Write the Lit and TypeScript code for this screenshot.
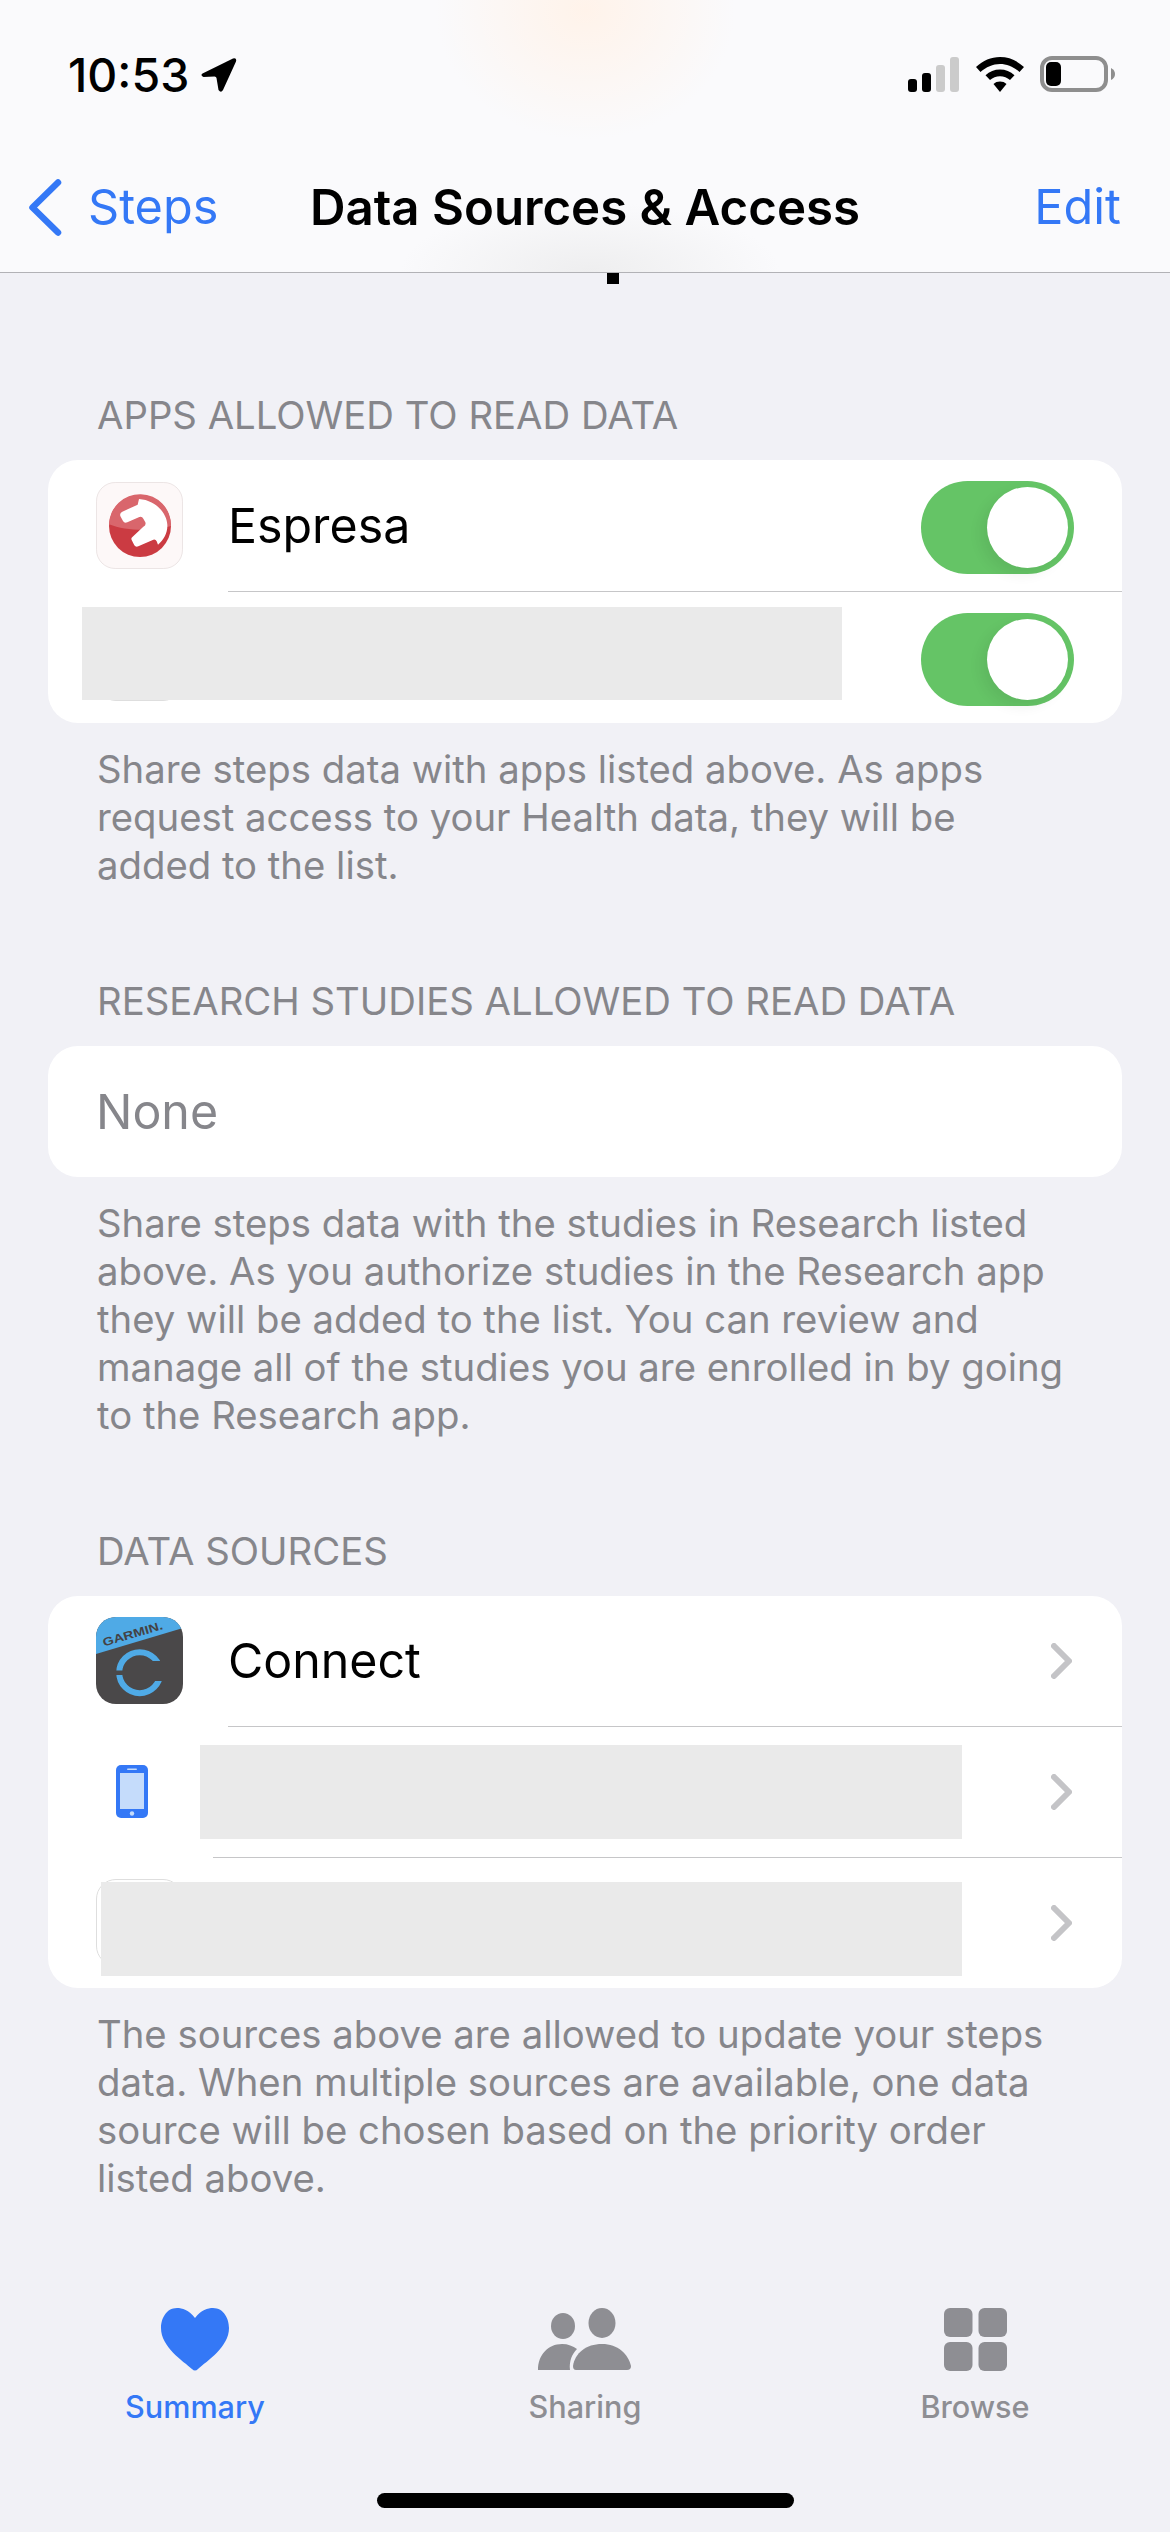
import { LitElement, html, css } from "lit";
import { customElement } from "lit/decorators.js";

const espresa = html`<svg class="app" viewBox="18 18 261 261" aria-hidden="true">
  <rect x="19.5" y="19.5" width="258" height="258" rx="56" fill="#fdf8f8" stroke="#e8e0e0" stroke-width="2.5"/>
  <circle cx="150" cy="150" r="93" fill="#cb3b42"/>
  <path d="M57 145 A93 93 0 0 1 243 150 C190 166 110 166 57 145Z" fill="#d9666c"/>
  <path d="M147 69 L143 86 L97 107 Q87 112 92 122 L99 135 Q103 143 112 139 L148 123 Q156 120 160 128 L166 139 Q169 148 160 152 L128 182 Q122 186 125 192 L133 208 Q137 214 145 211 L190 191 Q196 188 200 196 L204 206 C222 190 233 170 232 146 C230 110 195 72 147 69Z" fill="#fff"/>
</svg>`;

const garmin = html`<svg class="app" viewBox="0 0 87 87" aria-hidden="true">
  <defs><clipPath id="gc"><rect width="87" height="87" rx="20"/></clipPath></defs>
  <g clip-path="url(#gc)">
    <rect width="87" height="87" fill="#4a4849"/>
    <path d="M0 0H87V11L0 37Z" fill="#4faae6"/>
    <text x="8" y="29.500" transform="rotate(-16.4 8 29.500)" class="garmin" textLength="62" lengthAdjust="spacingAndGlyphs">GARMIN.</text>
  </g>
  <circle cx="43.700" cy="55.700" r="20.500" fill="none" stroke="#4faae6" stroke-width="6"/>
  <rect x="18" y="53.500" width="14" height="4.500" fill="#4a4849"/>
  <rect x="50" y="44" width="22" height="20" fill="#4a4849"/>
</svg>`;

const phone = html`<svg class="phone" width="32" height="53" viewBox="0 0 32 53" aria-hidden="true">
  <rect width="32" height="53" rx="5" fill="#3478f6"/>
  <rect x="4" y="8" width="24" height="36" fill="#c5dcfb"/>
  <rect x="11" y="3.5" width="10" height="1.6" rx=".8" fill="#c5dcfb"/>
  <circle cx="16" cy="48.5" r="2.2" fill="#c5dcfb"/>
</svg>`;

const chevron = html`<svg class="chev" width="21" height="36" viewBox="0 0 21 36" aria-hidden="true">
  <path d="M3 3 L18 18 L3 33" fill="none" stroke="#c4c4c7" stroke-width="6" stroke-linecap="round" stroke-linejoin="round"/>
</svg>`;

@customElement("app-root")
export class AppRoot extends LitElement {
  static styles = css`
    :host {
      display: flex;
      flex-direction: column;
      position: relative;
      width: 1170px;
      height: 2532px;
      overflow: hidden;
      background: #f1f1f6;
      font-family: Inter, "Liberation Sans", sans-serif;
      color: #000;
    }
    .head {
      height: 272px;
      flex: none;
      display: flex;
      flex-direction: column;
      border-bottom: 1px solid #b2b2b6;
      background:
        radial-gradient(ellipse 150px 130px at 585px 10px, #fff3ea 0%, rgba(255, 243, 234, 0) 100%),
        radial-gradient(ellipse 190px 70px at 590px 272px, #eeeeef 0%, rgba(238, 238, 239, 0) 100%),
        #fafafc;
    }
    .status {
      height: 142px;
      flex: none;
      display: flex;
      justify-content: space-between;
      align-items: flex-start;
      padding: 50px 55px 0 68px;
      box-sizing: border-box;
    }
    .time {
      display: flex;
      align-items: center;
      gap: 12px;
      font-size: 46.5px;
      font-weight: 500;
      line-height: 50px;
    }
    .sys {
      display: flex;
      align-items: flex-end;
      gap: 16px;
      padding-top: 6px;
    }
    .nav {
      flex: 1;
      display: grid;
      grid-template-columns: 1fr auto 1fr;
      align-items: center;
      padding: 0 49px;
      font-size: 48.6px;
      line-height: 60px;
    }
    .back {
      display: flex;
      align-items: center;
      gap: 26px;
      margin-left: -21px;
      color: #3478f6;
    }
    .title {
      font-size: 49.2px;
      font-weight: 600;
    }
    .edit {
      justify-self: end;
      color: #3478f6;
    }
    .mark {
      position: absolute;
      left: 607px;
      top: 273px;
      width: 12px;
      height: 11px;
      background: #000;
    }
    .content {
      padding: 118px 48px 0;
      display: flex;
      flex-direction: column;
      gap: 87px;
    }
    .label {
      padding-left: 49px;
      font-size: 38.3px;
      line-height: 48px;
      color: #86868b;
      margin-bottom: 21px;
    }
    .foot {
      padding: 0 49px;
      margin-top: 22px;
      font-size: 38.3px;
      line-height: 48.2px;
      color: #86868b;
    }
    .card {
      background: #fff;
      border-radius: 30px;
      overflow: hidden;
    }
    .row {
      position: relative;
      height: 130px;
      display: flex;
      align-items: center;
      padding: 0 50px 0 48px;
      font-size: 48.3px;
    }
    .row.tall {
      height: 131px;
    }
    .name {
      margin-left: 45px;
      flex: 1;
    }
    .none {
      color: #86868b;
    }
    .app {
      width: 87px;
      height: 87px;
      flex: none;
      display: block;
    }
    .blank {
      width: 87px;
      height: 87px;
      flex: none;
      box-sizing: border-box;
      border: 1px solid #dedede;
      border-radius: 20px;
    }
    .phone {
      margin-left: 20px;
      flex: none;
    }
    .spacer {
      flex: 1;
    }
    .chev {
      flex: none;
    }
    .sep {
      height: 1px;
      background: #c6c6c8;
      margin-left: 180px;
    }
    .sep.short {
      margin-left: 165px;
    }
    .toggle {
      width: 153px;
      height: 93px;
      margin: 4px -2px 0 0;
      border-radius: 47px;
      background: #65c466;
      flex: none;
      display: flex;
      justify-content: flex-end;
      align-items: center;
      padding-right: 6px;
      box-sizing: border-box;
    }
    .knob {
      width: 81px;
      height: 81px;
      border-radius: 50%;
      background: #fff;
      box-shadow: -6px 6px 14px rgba(0, 0, 0, 0.07);
    }
    .hide {
      position: absolute;
      background: #eaeaea;
    }
    .h1 {
      left: 34px;
      top: 15px;
      width: 760px;
      height: 93px;
    }
    .h2 {
      left: 152px;
      top: 18px;
      width: 762px;
      height: 94px;
    }
    .h3 {
      left: 53px;
      top: 24px;
      width: 861px;
      height: 94px;
    }
    .tabs {
      position: absolute;
      left: 0;
      right: 0;
      top: 2295px;
      display: grid;
      grid-template-columns: repeat(3, 390px);
    }
    .tab {
      display: flex;
      flex-direction: column;
      align-items: center;
      color: #8e8e93;
      font-size: 30.6px;
      font-weight: 500;
      line-height: 36px;
    }
    .tab.on {
      color: #3478f6;
    }
    .tab svg {
      display: block;
      margin-bottom: 4px;
    }
    .home {
      position: absolute;
      left: 377px;
      top: 2493px;
      width: 417px;
      height: 15px;
      border-radius: 8px;
      background: #000;
    }
    text.garmin {
      font-family: "Liberation Sans", sans-serif;
      font-weight: 700;
      font-size: 11.5px;
      fill: #444244;
    }
  `;

  private toggle() {
    return html`<div class="toggle"><div class="knob"></div></div>`;
  }

  render() {
    return html`
      <header class="head">
        <div class="status">
          <div class="time">
            <span>10:53</span>
            <svg width="36" height="36" viewBox="0 0 36 36" aria-hidden="true">
              <path d="M1.5 16.5 L32 1.5 Q36 0.5 35 4.5 L22 33 Q20 36.5 17.5 33 L15.5 21 Q15.2 19.5 13.5 19.5 L2.5 20 Q-1 18.5 1.5 16.5Z" fill="#000"/>
            </svg>
          </div>
          <div class="sys">
            <svg width="52" height="35" viewBox="0 0 52 35" aria-hidden="true">
              <rect x="0" y="22" width="9" height="13" rx="3" fill="#000"/>
              <rect x="14" y="16" width="9" height="19" rx="3" fill="#000"/>
              <rect x="28" y="8" width="9" height="27" rx="3" fill="#cbcbcb"/>
              <rect x="42" y="0" width="9" height="35" rx="3" fill="#cbcbcb"/>
            </svg>
            <svg width="48" height="35" viewBox="0 0 48 35" aria-hidden="true">
              <path d="M24 0 C33 0 41 3.500 48 10 L43.500 15 C38 10 31 7 24 7 C17 7 10 10 4.500 15 L0 10 C7 3.500 15 0 24 0Z" fill="#000"/>
              <path d="M24 12.500 C29.500 12.500 34.500 14.500 38.500 18.300 L34 23 C31.300 20.500 27.800 19.200 24 19.200 C20.200 19.200 16.700 20.500 14 23 L9.500 18.300 C13.500 14.500 18.500 12.500 24 12.500Z" fill="#000"/>
              <path d="M24 24.500 C26.500 24.500 28.800 25.300 30.500 27 L24 35 L17.500 27 C19.200 25.300 21.500 24.500 24 24.500Z" fill="#000"/>
            </svg>
            <svg width="75" height="36" viewBox="0 0 75 36" aria-hidden="true">
              <rect x="2" y="2" width="64" height="32" rx="10" fill="none" stroke="#8e8e8e" stroke-width="4"/>
              <rect x="6" y="6" width="15" height="24" rx="5" fill="#000"/>
              <path d="M71 12 Q75 14 75 18 Q75 22 71 24Z" fill="#8e8e8e"/>
            </svg>
          </div>
        </div>
        <nav class="nav">
          <div class="back">
            <svg width="34" height="57" viewBox="0 0 34 57" aria-hidden="true">
              <path d="M30 3.500 L4.500 28.500 L30 53.500" fill="none" stroke="#3478f6" stroke-width="6.500" stroke-linecap="round" stroke-linejoin="round"/>
            </svg>
            <span>Steps</span>
          </div>
          <div class="title">Data Sources &amp; Access</div>
          <div class="edit">Edit</div>
        </nav>
      </header>
      <div class="mark"></div>
      <main class="content">
        <section>
          <div class="label">APPS ALLOWED TO READ DATA</div>
          <div class="card">
            <div class="row tall">${espresa}<span class="name">Espresa</span>${this.toggle()}</div>
            <div class="sep"></div>
            <div class="row tall">
              <div class="blank"></div><span class="spacer"></span>${this.toggle()}
              <div class="hide h1"></div>
            </div>
          </div>
          <div class="foot">Share steps data with apps listed above. As apps request access to your Health data, they will be added to the list.</div>
        </section>
        <section>
          <div class="label">RESEARCH STUDIES ALLOWED TO READ DATA</div>
          <div class="card">
            <div class="row tall"><span class="none">None</span></div>
          </div>
          <div class="foot">Share steps data with the studies in Research listed above. As you authorize studies in the Research app they will be added to the list. You can review and manage all of the studies you are enrolled in by going to the Research app.</div>
        </section>
        <section>
          <div class="label">DATA SOURCES</div>
          <div class="card">
            <div class="row">${garmin}<span class="name">Connect</span>${chevron}</div>
            <div class="sep"></div>
            <div class="row">${phone}<span class="spacer"></span>${chevron}<div class="hide h2"></div></div>
            <div class="sep short"></div>
            <div class="row"><div class="blank"></div><span class="spacer"></span>${chevron}<div class="hide h3"></div></div>
          </div>
          <div class="foot">The sources above are allowed to update your steps data. When multiple sources are available, one data source will be chosen based on the priority order listed above.</div>
        </section>
      </main>
      <div class="tabs">
        <div class="tab on">
          <svg width="100" height="90" viewBox="0 0 100 90" aria-hidden="true">
            <path d="M50 23 C44 15 37 13 32 13 C21 13 16 24 16 33 C16 52 38 66 47 74 Q50 77 53 74 C62 66 84 52 84 33 C84 24 79 13 68 13 C63 13 56 15 50 23Z" fill="#3478f6"/>
          </svg>
          <span>Summary</span>
        </div>
        <div class="tab">
          <svg width="130" height="90" viewBox="0 0 130 90" aria-hidden="true">
            <ellipse cx="43" cy="31" rx="12" ry="13" fill="#8e8e93"/>
            <ellipse cx="82" cy="28" rx="13.500" ry="15" fill="#8e8e93"/>
            <path d="M18 75 C18 60 28 49 42 49 C48 49 53 51 57 54 C52 59 49 66 50 75Z" fill="#8e8e93"/>
            <path d="M56 75 Q53 75 53 71 C55 58 66 49 82 49 C98 49 108 59 111 71 Q111 75 107 75Z" fill="#8e8e93"/>
          </svg>
          <span>Sharing</span>
        </div>
        <div class="tab">
          <svg width="63" height="90" viewBox="0 0 63 90" aria-hidden="true">
            <rect x="0" y="13" width="28.500" height="29" rx="6" fill="#8e8e93"/>
            <rect x="34.500" y="13" width="28.500" height="29" rx="6" fill="#8e8e93"/>
            <rect x="0" y="47" width="28.500" height="29" rx="6" fill="#8e8e93"/>
            <rect x="34.500" y="47" width="28.500" height="29" rx="6" fill="#8e8e93"/>
          </svg>
          <span>Browse</span>
        </div>
      </div>
      <div class="home"></div>
    `;
  }
}
